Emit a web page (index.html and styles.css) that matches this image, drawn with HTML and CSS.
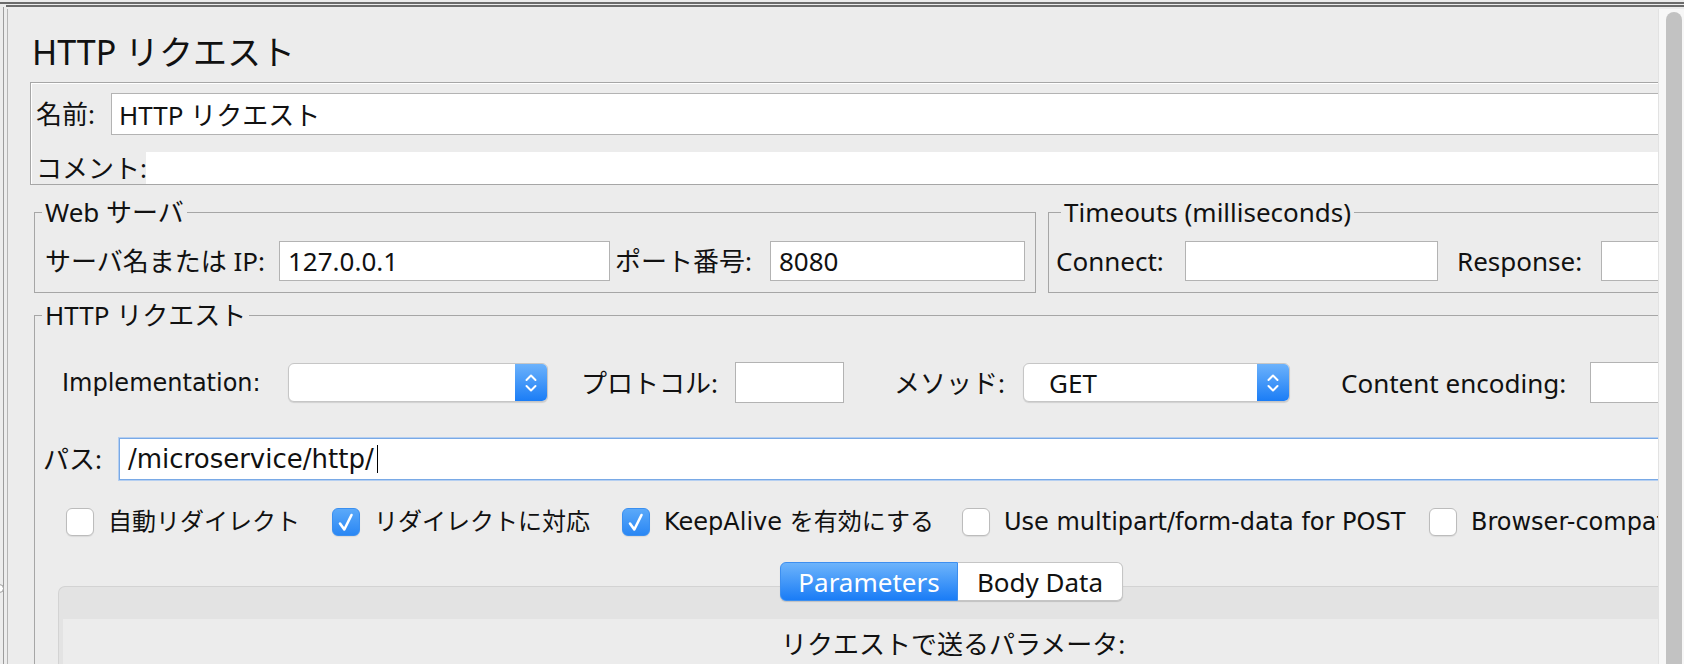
FILE: index.html
```html
<!DOCTYPE html>
<html lang="ja">
<head>
<meta charset="utf-8">
<title>HTTP リクエスト</title>
<link rel="stylesheet" href="styles.css">
</head>
<body>
<div class="window">
  <div class="rule rule-outer"></div>
  <div class="rule rule-inner"></div>
  <div class="frame">
    <div class="pane">
      <div class="viewport">
        <div class="content">
          <h1 class="title">HTTP リクエスト</h1>

          <div class="namebox">
            <div class="row name-row">
              <label class="jp l-name">名前:</label>
              <div class="field name-field jp">HTTP リクエスト</div>
            </div>
            <div class="row comment-row">
              <label class="jp l-comment">コメント:</label>
              <div class="comment-field"></div>
            </div>
          </div>

          <div class="server-row">
            <fieldset class="group web">
              <legend class="jp">Web サーバ</legend>
              <div class="row">
                <label class="jp l-server">サーバ名または IP:</label>
                <div class="field jp f-server">127.0.0.1</div>
                <label class="jp l-port">ポート番号:</label>
                <div class="field jp f-port">8080</div>
              </div>
            </fieldset>
            <fieldset class="group timeouts">
              <legend class="jp">Timeouts (milliseconds)</legend>
              <div class="row">
                <label class="jp l-connect">Connect:</label>
                <div class="field f-time"></div>
                <label class="jp l-response">Response:</label>
                <div class="field f-time"></div>
              </div>
            </fieldset>
          </div>

          <fieldset class="group http">
            <legend class="jp">HTTP リクエスト</legend>

            <div class="row impl-row">
              <label class="lg l-impl">Implementation:</label>
              <div class="combo c-impl">
                <span class="combo-value jp"></span>
                <span class="combo-arrow"><svg width="14" height="24" viewBox="0 0 14 24"><path d="M2.5 9 L7 4.5 L11.5 9 M2.5 15 L7 19.5 L11.5 15" fill="none" stroke="#fff" stroke-width="2" stroke-linecap="round" stroke-linejoin="round"/></svg></span>
              </div>
              <label class="jp l-proto">プロトコル:</label>
              <div class="field f-proto"></div>
              <label class="jp l-method">メソッド:</label>
              <div class="combo c-method">
                <span class="combo-value jp">GET</span>
                <span class="combo-arrow"><svg width="14" height="24" viewBox="0 0 14 24"><path d="M2.5 9 L7 4.5 L11.5 9 M2.5 15 L7 19.5 L11.5 15" fill="none" stroke="#fff" stroke-width="2" stroke-linecap="round" stroke-linejoin="round"/></svg></span>
              </div>
              <label class="jp l-enc">Content encoding:</label>
              <div class="field f-enc"></div>
            </div>

            <div class="row path-row">
              <label class="jp l-path">パス:</label>
              <div class="field path-field lg-path">/microservice/http/<span class="caret"></span></div>
            </div>

            <div class="row checks">
              <div class="check k1"><span class="box"></span><span class="lg">自動リダイレクト</span></div>
              <div class="check k2"><span class="box on"><svg width="28" height="28" viewBox="0 0 28 28"><path d="M8 15.5 L12.3 21.5 L19.5 7" fill="none" stroke="#fff" stroke-width="2.6" stroke-linecap="round" stroke-linejoin="round"/></svg></span><span class="lg">リダイレクトに対応</span></div>
              <div class="check k3"><span class="box on"><svg width="28" height="28" viewBox="0 0 28 28"><path d="M8 15.5 L12.3 21.5 L19.5 7" fill="none" stroke="#fff" stroke-width="2.6" stroke-linecap="round" stroke-linejoin="round"/></svg></span><span class="lg">KeepAlive を有効にする</span></div>
              <div class="check k4"><span class="box"></span><span class="lg">Use multipart/form-data for POST</span></div>
              <div class="check k5"><span class="box"></span><span class="lg">Browser-compatible headers</span></div>
            </div>

            <div class="tabpanel">
              <div class="tabs">
                <div class="tab active jp">Parameters</div>
                <div class="tab jp">Body Data</div>
              </div>
              <div class="tabbody">
                <div class="tabinner">
                  <div class="jp params-label">リクエストで送るパラメータ:</div>
                </div>
              </div>
            </div>
          </fieldset>
        </div>
      </div>
      <div class="scrollbar"><div class="thumb"></div></div>
    </div>
  </div>
  <div class="split-handle"></div>
</div>
</body>
</html>
```

FILE: styles.css
```css
* { box-sizing: border-box; }
html, body { margin: 0; padding: 0; }
body {
  width: 1684px;
  height: 664px;
  overflow: hidden;
  background: #ececec;
  color: #111;
}
.window {
  position: relative;
  height: 664px;
  display: flex;
  flex-direction: column;
  background: #ececec;
}
.rule { height: 2px; background: #6b6b6b; flex: none; }
.rule-outer { margin-top: 2px; }
.rule-inner { margin-top: 1px; margin-left: 6px; }
.frame {
  flex: 1;
  min-height: 0;
  display: flex;
  margin-left: 3px;
  border-left: 1px solid #9c9c9c;
  padding-left: 3px;
}
.pane {
  flex: 1;
  min-width: 0;
  display: flex;
  margin-top: 2px;
  border-left: 1px solid #b4b4b4;
}
.viewport {
  flex: 1;
  min-width: 0;
  overflow: hidden;
  background: #ececec;
}
.content { width: 1900px; }

.jp { font-family: "Noto Sans", "Noto Sans CJK JP", sans-serif; font-size: 26px; }
.lg { font-family: "DejaVu Sans", "Noto Sans CJK JP", sans-serif; font-size: 24px; line-height: 28px; }
.lg-path { font-family: "DejaVu Sans", "Noto Sans CJK JP", sans-serif; font-size: 26px; }

label { white-space: nowrap; flex: none; line-height: 30px; }

.title {
  margin: 23px 0 0 24px;
  font-family: "Noto Sans", "Noto Sans CJK JP", sans-serif;
  font-size: 34px;
  line-height: 40px;
  font-weight: 400;
}

.row { display: flex; align-items: center; }

.field {
  background: #fff;
  border: 1px solid #b3b3b3;
  flex: none;
  height: 40px;
  display: flex;
  align-items: center;
  white-space: nowrap;
}

/* name / comment box */
.namebox {
  margin: 10px 0 0 22px;
  border: 1px solid #a6a6a6;
  box-shadow: inset 1px 1px 0 #fff;
  padding: 10px 0 0 5px;
}
.l-name { width: 75px; }
.name-field { flex: 1; height: 42px; padding-left: 7px; }
.comment-row { margin-top: 17px; }
.l-comment { width: 110px; }
.comment-field { flex: 1; height: 32px; background: #fff; }

/* group boxes */
.group {
  margin: 0;
  border: 1px solid #a6a6a6;
  min-width: 0;
}
.group legend {
  padding: 0 3px;
  line-height: 30px;
  background: #ececec;
}
.server-row {
  display: flex;
  gap: 12px;
  margin: 12px 0 0 26px;
}
.web { flex: none; padding: 14px 10px 11px 10px; }
.web legend { margin-left: -3px; }
.timeouts { flex: 1; padding: 14px 0 11px 7px; }
.timeouts legend { margin-left: 5px; }

.l-server { width: 234px; }
.f-server { width: 331px; padding-left: 8px; }
.l-port { width: 160px; padding-left: 5px; }
.f-port { width: 255px; padding-left: 8px; }
.l-connect { width: 129px; }
.f-time { width: 253px; }
.l-response { width: 163px; padding-left: 19px; }

.http {
  margin: 7px 0 0 26px;
  padding: 32px 0 0 8px;
}
.http legend { margin-left: -1px; }

/* implementation row */
.impl-row { margin-left: 19px; height: 41px; }
.l-impl { width: 226px; }
.combo {
  flex: none;
  height: 39px;
  display: flex;
  background: #fff;
  border: 1px solid #c6c6c6;
  border-radius: 6px;
  box-shadow: 0 1px 1px rgba(0, 0, 0, 0.12);
  overflow: hidden;
}
.combo-value {
  flex: 1;
  display: flex;
  align-items: center;
  padding-left: 25px;
}
.combo-arrow {
  width: 32px;
  flex: none;
  display: flex;
  align-items: center;
  justify-content: center;
  background: linear-gradient(#6cb2fb, #1b7df6);
}
.c-impl { width: 260px; }
.c-method { width: 267px; }
.l-proto { width: 187px; padding-left: 33px; }
.f-proto { width: 109px; height: 41px; }
.l-method { width: 179px; padding-left: 50px; }
.l-enc { width: 300px; padding-left: 51px; }
.f-enc { width: 200px; height: 41px; }

/* path row */
.path-row { margin-top: 35px; }
.l-path { width: 76px; }
.path-field {
  flex: 1;
  height: 42px;
  padding-left: 8px;
  border: 1px solid #79a9e6;
  box-shadow: 0 0 0 1px #b5cff1;
}
.caret {
  display: inline-block;
  width: 0;
  height: 28px;
  border-left: 1.5px solid #000;
  margin-left: 3px;
}

/* checkboxes */
.checks { margin: 28px 0 0 23px; height: 28px; }
.check { display: flex; align-items: center; gap: 14px; flex: none; white-space: nowrap; height: 28px; }
.k1 { width: 266px; }
.k2 { width: 290px; }
.k3 { width: 340px; }
.k4 { width: 467px; }
.box {
  width: 28px;
  height: 28px;
  flex: none;
  background: #fff;
  border: 1px solid #bcbcbc;
  border-radius: 6px;
  box-shadow: 0 1px 1px rgba(0, 0, 0, 0.08);
}
.box.on {
  background: linear-gradient(#5ba9f9, #2a87f4);
  border-color: #3a8ff0;
  display: flex;
}
.box.on svg { margin: -1px; }

/* tabs */
.tabpanel { margin: 26px 0 0 15px; }
.tabs {
  display: flex;
  margin: 0 0 -15px 722px;
  height: 39px;
  position: relative;
  z-index: 1;
}
.tab {
  display: flex;
  align-items: center;
  justify-content: center;
  width: 165px;
  background: #fff;
  border: 1px solid #c5c5c5;
  border-left: none;
  border-radius: 0 6px 6px 0;
  box-shadow: 0 1px 1px rgba(0, 0, 0, 0.15);
}
.tab.active {
  width: 178px;
  color: #fff;
  background: linear-gradient(#6db4fb, #1a7cf6);
  border: 1px solid #3d8ff0;
  border-radius: 6px 0 0 6px;
}
.tabbody {
  border-top: 1px solid #d3d3d3;
  border-left: 1px solid #d3d3d3;
  border-radius: 7px 0 0 0;
  background: #e3e3e3;
  padding: 32px 0 0 4px;
}
.tabinner {
  background: #ececec;
  height: 200px;
  padding: 10px 0 0 718px;
}
.params-label { line-height: 30px; }

/* scrollbar */
.scrollbar {
  width: 26px;
  flex: none;
  display: flex;
  background: #f7f7f7;
  border-left: 1px solid #e2e2e2;
  padding: 3px 2px 0 7px;
}
.thumb {
  flex: 1;
  background: #c2c2c2;
  border-radius: 8px 8px 0 0;
}

/* split pane handle peeking at the left edge */
.split-handle {
  position: absolute;
  left: -5px;
  top: 584px;
  width: 9px;
  height: 9px;
  border-radius: 50%;
  background: #fff;
  border: 1px solid #9a9a9a;
}
```
